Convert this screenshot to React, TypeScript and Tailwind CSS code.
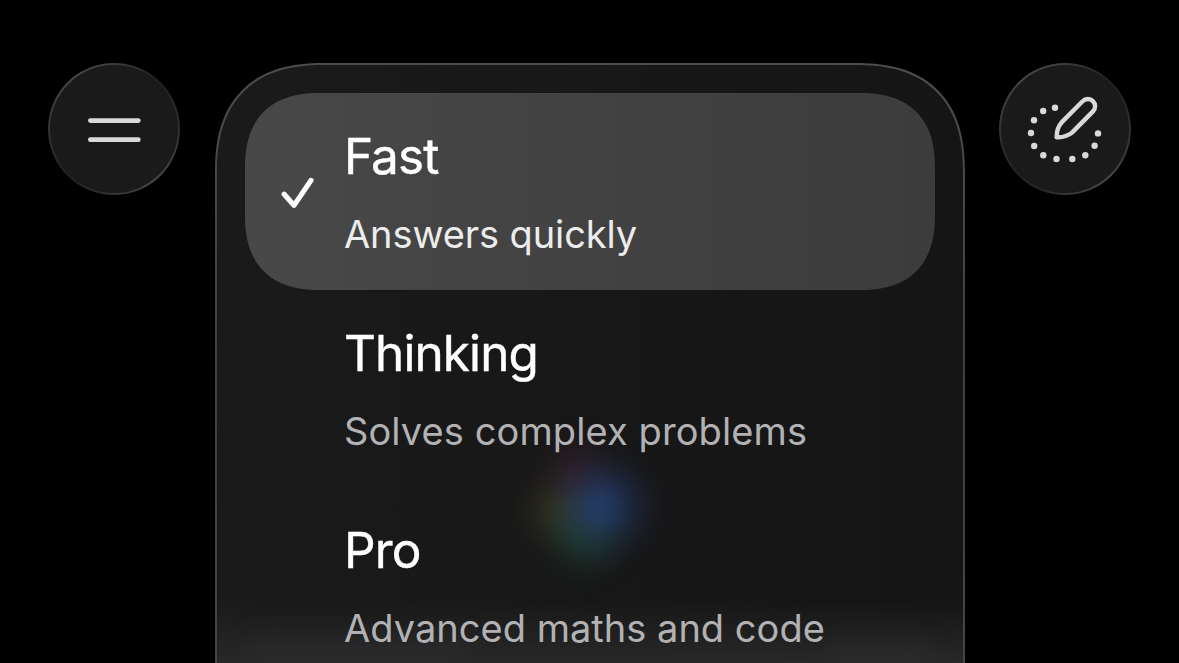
import React from "react";

type Mode = {
  id: string;
  title: string;
  description: string;
  descriptionSpacing: string;
  selected?: boolean;
};

const modes: Mode[] = [
  {
    id: "fast",
    title: "Fast",
    description: "Answers quickly",
    descriptionSpacing: "tracking-[-0.1px]",
    selected: true,
  },
  {
    id: "thinking",
    title: "Thinking",
    description: "Solves complex problems",
    descriptionSpacing: "tracking-[0.1px]",
  },
  {
    id: "pro",
    title: "Pro",
    description: "Advanced maths and code",
    descriptionSpacing: "tracking-[0.02px]",
  },
];

function GlassButton({ label, children }: { label: string; children: React.ReactNode }) {
  return (
    <button
      aria-label={label}
      className="flex size-[132px] shrink-0 rounded-full bg-[conic-gradient(from_0deg,#3c3c3c,#1f1f1f_45deg,#303030_90deg,#474747_140deg,#333333_180deg,#212121_225deg,#343434_270deg,#474747_320deg,#3c3c3c)] p-[2px]"
    >
      <span className="flex-1 self-stretch rounded-full bg-[#1a1a1a]">{children}</span>
    </button>
  );
}

function MenuIcon() {
  return (
    <svg viewBox="2 2 128 128" className="size-full" stroke="#d9d9d9" strokeWidth="4.8" strokeLinecap="round">
      <path d="M42.4 57.6H90.3M42.4 76.7H90.3" />
    </svg>
  );
}

const dots = [
  [56, 44.7],
  [44.2, 48],
  [35, 57.3],
  [32, 70],
  [35.2, 83],
  [44.3, 92.2],
  [57.5, 96],
  [73.3, 96],
  [86.3, 92.2],
  [95.6, 82.8],
  [99, 70.4],
];

function TemporaryChatIcon() {
  return (
    <svg viewBox="2 2 128 128" className="size-full" fill="none">
      {dots.map(([cx, cy]) => (
        <circle key={`${cx}-${cy}`} cx={cx} cy={cy} r="3.2" fill="#d9d9d9" />
      ))}
      <path
        d="M57.6 74.2C57.6 68.4 58.6 63.8 62.6 59.4L83.6 38.2A7.25 7.25 0 0 1 94 48.4L73 69.6C68.6 73.2 63.5 74.5 57.6 74.2Z"
        stroke="#d9d9d9"
        strokeWidth="4.4"
        strokeLinejoin="round"
      />
    </svg>
  );
}

function ModeRow({ mode }: { mode: Mode }) {
  return (
    <div
      className={
        mode.selected
          ? "flex h-[197px] items-center gap-7 rounded-[76px] bg-linear-to-r from-[#484848] to-[#3c3c3c] pl-[35.5px] [corner-shape:superellipse(1.29)]"
          : "flex h-[197px] items-center gap-7 pl-[35.5px]"
      }
    >
      <div className="flex size-9 shrink-0">
        {mode.selected && (
          <svg width="36" height="36" viewBox="0 0 36 36" fill="none">
            <path
              d="M4.2 20.2L14 31.4L31 6.4"
              stroke="#fff"
              strokeWidth="5.2"
              strokeLinecap="round"
              strokeLinejoin="round"
            />
          </svg>
        )}
      </div>
      <div className="flex flex-col gap-[25px] whitespace-nowrap">
        <div className="text-[49.5px] leading-[60px] tracking-[-0.9px] text-white [-webkit-text-stroke:0.4px_white]">
          {mode.title}
        </div>
        <div
          className={`text-[38px] leading-[46px] ${mode.descriptionSpacing} ${
            mode.selected ? "text-[#ececec]" : "text-[#b2b2b4]"
          }`}
        >
          {mode.description}
        </div>
      </div>
    </div>
  );
}

// Blurred logo and page content showing through the glass
function Backdrop() {
  return (
    <div className="pointer-events-none absolute inset-0 flex flex-col justify-end">
      <div className="ml-[278px] size-[180px] bg-[radial-gradient(circle_at_59%_47%,#274684b8_0px,#27468490_16px,#27468448_32px,#27468418_48px,transparent_64px),radial-gradient(circle_at_45%_27%,#4a243260_0px,#4a243248_14px,#4a24321c_30px,transparent_46px),radial-gradient(circle_at_50%_64%,#1d4a3690_0px,#1d4a3668_16px,#1d4a362c_32px,transparent_52px),radial-gradient(circle_at_36%_50%,#423f1ca0_0px,#423f1c78_14px,#423f1c30_30px,transparent_50px)] blur-[6px]" />
      <div className="flex h-[62px] items-end justify-between bg-linear-to-b from-transparent to-[#282829] px-8">
        <div className="h-6 w-[220px] bg-[#303032]/50 blur-[12px]" />
        <div className="h-5 w-[100px] bg-[#323234]/50 blur-[11px]" />
      </div>
    </div>
  );
}

export default function App() {
  return (
    <main className="flex h-[663px] w-[1179px] items-start justify-between overflow-hidden bg-black px-12 pt-[63px] font-['Inter',sans-serif]">
      <GlassButton label="Menu">
        <MenuIcon />
      </GlassButton>
      <section className="flex h-[600px] w-[750px] shrink-0 rounded-t-[110px] bg-linear-to-b from-[#4c4c4c] via-[#404042] to-[#44444a] px-[2px] pt-[2px] [corner-shape:superellipse(1.29)]">
        <div className="relative flex-1 overflow-hidden rounded-t-[108px] bg-linear-to-r from-[#1a1a1b] to-[#151516] [corner-shape:superellipse(1.29)]">
          <Backdrop />
          <div className="relative flex flex-col px-7 pt-7">
            {modes.map((mode) => (
              <ModeRow key={mode.id} mode={mode} />
            ))}
          </div>
        </div>
      </section>
      <GlassButton label="Temporary chat">
        <TemporaryChatIcon />
      </GlassButton>
    </main>
  );
}
